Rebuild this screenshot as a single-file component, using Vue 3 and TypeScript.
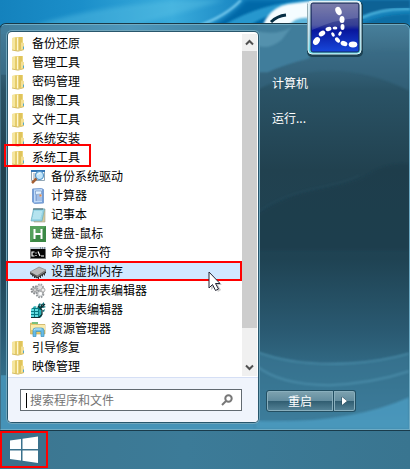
<script setup lang="ts">
import { ref } from 'vue'

type IconName =
  | 'folder' | 'backup' | 'calc' | 'note' | 'keys' | 'cmd'
  | 'chip' | 'gears' | 'registry' | 'explorer'

interface Entry {
  label: string
  icon: IconName
  child?: boolean
  active?: boolean
  mark?: 'label' | 'row'
}

const entries: Entry[] = [
  { label: '备份还原', icon: 'folder' },
  { label: '管理工具', icon: 'folder' },
  { label: '密码管理', icon: 'folder' },
  { label: '图像工具', icon: 'folder' },
  { label: '文件工具', icon: 'folder' },
  { label: '系统安装', icon: 'folder' },
  { label: '系统工具', icon: 'folder', mark: 'label' },
  { label: '备份系统驱动', icon: 'backup', child: true },
  { label: '计算器', icon: 'calc', child: true },
  { label: '记事本', icon: 'note', child: true },
  { label: '键盘-鼠标', icon: 'keys', child: true },
  { label: '命令提示符', icon: 'cmd', child: true },
  { label: '设置虚拟内存', icon: 'chip', child: true, active: true, mark: 'row' },
  { label: '远程注册表编辑器', icon: 'gears', child: true },
  { label: '注册表编辑器', icon: 'registry', child: true },
  { label: '资源管理器', icon: 'explorer', child: true },
  { label: '引导修复', icon: 'folder' },
  { label: '映像管理', icon: 'folder' },
]

const query = ref('')
</script>

<template>
  <div class="desktop">
    <svg class="art" viewBox="0 0 410 469" preserveAspectRatio="none" aria-hidden="true">
      <defs>
        <linearGradient id="sky" x1="0" x2="1" y1="0" y2="0">
          <stop offset="0" stop-color="#1482bd" />
          <stop offset=".2" stop-color="#1b8fca" />
          <stop offset=".42" stop-color="#3aacdc" />
          <stop offset=".6" stop-color="#1683c0" />
          <stop offset="1" stop-color="#1681b8" />
        </linearGradient>
        <filter id="soft"><feGaussianBlur stdDeviation="2" /></filter>
        <filter id="soft1"><feGaussianBlur stdDeviation="1" /></filter>
      </defs>
      <rect width="410" height="469" fill="url(#sky)" />
      <path d="M20 30Q80 8 180 0H225Q150 22 100 34Z" fill="#5fc4e6" opacity=".4" filter="url(#soft)" />
      <path d="M205 30C225 18 236 12 246 0H310V32Z" fill="#0568a7" filter="url(#soft)" />
      <path d="M198 26Q226 16 241 0" fill="none" stroke="#7fd0f2" stroke-width="2" filter="url(#soft1)" />
      <path d="M222 26Q262 2 312 0L300 9Q268 12 246 28Z" fill="#2697ce" filter="url(#soft1)" />
      <path d="M262 28Q268 8 288 4L312 1V26Z" fill="#f4fcff" filter="url(#soft1)" />
      <path d="M288 26Q296 16 310 18V28Z" fill="#5bb4da" filter="url(#soft1)" />
      <path d="M271 22Q277 16 286 15" fill="none" stroke="#042d43" stroke-width="3" />
      <path d="M360 0H410V8Q385 8 362 16Z" fill="#086295" filter="url(#soft1)" />
      <path d="M361 18Q382 8 410 9" fill="none" stroke="#59bde3" stroke-width="2" filter="url(#soft1)" />
      <path d="M362 24Q385 13 410 14V24Z" fill="#0b6ea5" filter="url(#soft1)" />
    </svg>

    <section class="menu" aria-label="开始菜单">
      <svg class="art" viewBox="0 24 410 406" preserveAspectRatio="none" aria-hidden="true">
        <defs>
          <linearGradient id="glass" x1="0" x2="0" y1="0" y2="1">
            <stop offset="0" stop-color="#477f9b" />
            <stop offset=".1" stop-color="#35637b" />
            <stop offset=".16" stop-color="#2a5366" />
            <stop offset=".36" stop-color="#21414f" />
            <stop offset=".58" stop-color="#1f4353" />
            <stop offset=".76" stop-color="#2a5a72" />
            <stop offset=".88" stop-color="#34708c" />
            <stop offset="1" stop-color="#4389ab" />
          </linearGradient>
          <linearGradient id="rim" x1="0" x2="1" y1="0" y2="0">
            <stop offset="0" stop-color="#437f9c" />
            <stop offset=".5" stop-color="#4e97bb" />
            <stop offset="1" stop-color="#3c7b99" />
          </linearGradient>
          <filter id="haze"><feGaussianBlur stdDeviation="1.2" /></filter>
        </defs>
        <rect y="24" width="410" height="406" fill="url(#glass)" />
        <rect y="24" width="258" height="9" fill="url(#rim)" />
        <rect y="24" width="8" height="50" fill="#417c99" opacity=".5" />
        <rect y="376" width="8" height="54" fill="#4590b3" />
        <rect y="421" width="410" height="9" fill="#4693b8" />
        <path d="M256 24H310V58Q285 64 268 72H256Z" fill="#417d9b" filter="url(#haze)" />
        <path d="M256 30Q278 35 292 26L282 39Q268 50 256 44Z" fill="#69a6bf" opacity=".5" filter="url(#haze)" />
        <path d="M256 72H270Q320 48 410 50V90Q330 50 256 90Z" fill="#376b85" opacity=".5" filter="url(#haze)" />
        <path d="M256 216C300 184 345 192 370 174Q390 161 410 164V250H256Z" fill="#1b3a49" opacity=".5" filter="url(#haze)" />
        <path d="M258 212C296 185 330 190 360 175" fill="none" stroke="#2f5a6d" stroke-width="1" opacity=".4" filter="url(#haze)" />
        <path d="M256 352Q295 367 350 364Q382 362 410 354V430H256Z" fill="#3a7995" opacity=".65" filter="url(#haze)" />
        <path d="M256 352Q295 367 350 364Q382 362 410 354" fill="none" stroke="#5aa0be" stroke-width="2" opacity=".5" filter="url(#haze)" />
        <path d="M256 366Q280 386 330 386Q374 384 410 372" fill="none" stroke="#5aa0bd" stroke-width="2" opacity=".5" filter="url(#haze)" />
        <path d="M256 422Q350 425 410 398V430H256Z" fill="#4d9dc2" opacity=".8" filter="url(#haze)" />
      </svg>

      <div class="panel">
        <div class="programs">
          <ul class="list">
            <li v-for="e in entries" :key="e.label">
              <button type="button" class="entry" :class="{ child: e.child, active: e.active }">
                <svg v-if="e.icon === 'folder'" class="icon" viewBox="0 0 16 16" aria-hidden="true">
                  <path d="M2 2l5-1h6v12l-5 2-6-1z" fill="#ecd67c" />
                  <path d="M2 2l3-.6V14.600L2 14z" fill="#f5e6a0" />
                  <path d="M5 1.400L8 2v13l-3-.5z" fill="#e6cd6b" />
                  <path d="M7 2l1.500-1v13L7 15z" fill="#fff8d0" />
                  <path d="M8.500 1H12v12l-3.500 1.500z" fill="#e0c45c" />
                  <path d="M11 6.500l3 .500v6.500L11 15z" fill="#f3e097" />
                  <path d="M2 14l6 1.200L14 13.500" fill="none" stroke="#cdb255" stroke-width=".8" />
                  <path d="M13.500 10.500V13" stroke="#54a8c9" />
                </svg>
                <svg v-else-if="e.icon === 'backup'" class="icon" viewBox="0 0 16 16" aria-hidden="true">
                  <path d="M1.500 1.500h13v10h-13z" fill="#fff" stroke="#91a6b5" />
                  <path d="M1 1h14v2H1z" fill="#3879b8" />
                  <path d="M3 5h3M3 7h2M3 9h2" stroke="#8f9ca8" />
                  <circle cx="9.500" cy="6.500" r="4" fill="#c2e5fa" stroke="#5397cc" stroke-width="1.200" />
                  <path d="M7.500 6q1-2 3-2" fill="none" stroke="#fff" />
                  <path d="M6.500 9.500L2 14" stroke="#a35f35" stroke-width="2.500" />
                </svg>
                <svg v-else-if="e.icon === 'calc'" class="icon" viewBox="0 0 16 16" aria-hidden="true">
                  <path d="M2.500 1l9-.5 2 1V15l-9 .5-2-1.500z" fill="#739fdb" stroke="#7c9fd0" />
                  <path d="M4 1.500l8-.5v13l-8 .500z" fill="#c0daf7" />
                  <path d="M5.500 3h6v3l-6 .500z" fill="#e3f2ff" stroke="#6386bc" stroke-width=".6" />
                  <path d="M5.500 8h2m1 0h1M5.500 10h2m1 0h1m1 0h1M5.500 12h2m1 0h1m1 0h1" stroke="#4b70b5" stroke-width="1.200" />
                  <path d="M9.500 6.500h2v2h-2z" fill="#ec8a3f" />
                </svg>
                <svg v-else-if="e.icon === 'note'" class="icon" viewBox="0 0 16 16" aria-hidden="true">
                  <path d="M4 2h11v13H4z" fill="#d5ca9d" stroke="#a2a28f" stroke-width=".6" />
                  <path d="M3.500 2h11L12 14H1z" fill="#98d5e6" stroke="#5da4b7" stroke-width=".6" />
                  <path d="M4 5h8M3.500 7h8M3 9h8M2.500 11h8" stroke="#d1f2f8" />
                  <path d="M4 1v2M6 1v2M8 1v2M10 1v2M12 1v2" stroke="#46646d" stroke-width="1" />
                </svg>
                <svg v-else-if="e.icon === 'keys'" class="icon" viewBox="0 0 16 16" aria-hidden="true">
                  <rect width="16" height="16" fill="#3b8945" />
                  <path d="M0 0h16L0 16z" fill="#55a15c" />
                  <path d="M4.500 3v10M11.500 3v10M4.500 8h7" stroke="#fff" stroke-width="2" />
                </svg>
                <svg v-else-if="e.icon === 'cmd'" class="icon" viewBox="0 0 16 16" aria-hidden="true">
                  <path d="M.5 2.500h15v11H.5z" fill="#050505" stroke="#777" />
                  <path d="M0 2h16v2H0z" fill="#c6d0da" />
                  <path d="M10 3h1M12 3h1M14 3h1" stroke="#456" />
                  <path d="M4.500 7H2v4h2.500M6 7.500v1M6 10v1M8 6.500l2 4.500M11 11h3" fill="none" stroke="#fff" stroke-width="1.200" />
                </svg>
                <svg v-else-if="e.icon === 'chip'" class="icon" viewBox="0 0 16 16" aria-hidden="true">
                  <path d="M0 9v1l7 4.500L16 9V7z" fill="#292929" />
                  <path d="M0 8l9-5 7 3-9 6z" fill="#b9b9b9" stroke="#777" stroke-width=".6" />
                  <path d="M0 8l7 4v1.500L0 9.500z" fill="#555" />
                  <path d="M7 12l9-6v1.500L7 13.500z" fill="#808080" />
                  <path d="M2.500 10.500v2M4.500 12v2M8.500 13v2M10.500 12v2M12.500 10.500v2M14.500 9.500v2" stroke="#333" />
                </svg>
                <svg v-else-if="e.icon === 'gears'" class="icon" viewBox="0 0 16 16" aria-hidden="true">
                  <circle cx="5" cy="7" r="3.500" fill="#c6c8ca" stroke="#85888b" stroke-width="2" stroke-dasharray="1.600 1.100" />
                  <circle cx="5" cy="7" r="1.400" fill="#fff" stroke="#999" />
                  <circle cx="10" cy="4.500" r="3" fill="#dedfe0" stroke="#a0a3a6" stroke-width="2" stroke-dasharray="1.400 1" />
                  <circle cx="10" cy="11" r="3.300" fill="#d7d9db" stroke="#93979a" stroke-width="2" stroke-dasharray="1.500 1.100" />
                  <circle cx="10.500" cy="10.500" r="1.500" fill="#fff" />
                  <circle cx="13" cy="7" r="2" fill="#eee" stroke="#aaa" />
                </svg>
                <svg v-else-if="e.icon === 'registry'" class="icon" viewBox="0 0 16 16" aria-hidden="true">
                  <path d="M1 7l3-2 3 1 2-3 2 1 1 10-2 2H1z" fill="#087c83" />
                  <path d="M1 7h3v2H1zm4 0h3v2H5zM1 10h3v2H1zm4 0h3v2H5zM1 13h3v2H1zm4 0h3v2H5z" fill="#61dce0" />
                  <path d="M9 8h2v5l-2 2zM3 5l2-1 2 1-2 1z" fill="#27b3b9" />
                  <path d="M8 3l2-2 1 2-2 1zm4-1l2-2v3h-2zm-1 3l3-1 2 1-3 1zm1 4l3-2-1 3z" fill="#087179" />
                  <path d="M8 4l4 4m0-6l-1 4m4-4l-4 4M1 15.500h8l3-3V8" fill="none" stroke="#112f32" stroke-width="1.200" />
                </svg>
                <svg v-else class="icon" viewBox="0 0 16 16" aria-hidden="true">
                  <path d="M.5 2h5l1 1.500h8.500V13H.5z" fill="#e6ca69" stroke="#bfa34b" stroke-width=".6" />
                  <path d="M2 1h6v2H2z" fill="#79c17e" />
                  <path d="M1 4h14v5H1z" fill="#faeba9" />
                  <path d="M3 15.500V9.500Q3 7 5.500 7h6Q14 7 14 9.500v6h-3v-5H6v5z" fill="#68bce6" stroke="#3c8fbd" stroke-width=".7" />
                  <path d="M4 9.500Q4 8 5.500 8h6" fill="none" stroke="#c6edff" />
                </svg>
                <span class="label">{{ e.label }}</span>
              </button>
              <span v-if="e.mark" class="mark" :class="e.mark"></span>
              <svg v-if="e.active" class="pointer" viewBox="0 0 14 22" aria-hidden="true">
                <path d="M3 4v15l4-3 3 5 3-2-3-5h4z" fill="#555" opacity=".3" />
                <path d="M1 1v16l3.500-3.500 3 6 3-1.500-3-5.500H12z" fill="#fff" stroke="#252535" />
              </svg>
            </li>
          </ul>
          <div class="scroll">
            <button type="button" aria-label="向上滚动">
              <svg viewBox="0 0 9 7" aria-hidden="true"><path d="M1 5.500l3.500-3.500L8 5.500" /></svg>
            </button>
            <div class="track"><div class="thumb"></div></div>
            <button type="button" aria-label="向下滚动">
              <svg viewBox="0 0 9 7" aria-hidden="true"><path d="M1 1.500L4.500 5 8 1.500" /></svg>
            </button>
          </div>
        </div>
        <div class="searchbar">
          <label class="search">
            <span class="caret"></span>
            <input v-model="query" type="text" placeholder="搜索程序和文件" aria-label="搜索程序和文件" />
            <svg viewBox="0 0 12 12" aria-hidden="true">
              <circle cx="7.500" cy="4.500" r="3.200" />
              <path d="M5 7L1 11" />
            </svg>
          </label>
        </div>
      </div>

      <div class="side">
        <nav class="links">
          <a href="#computer">计算机</a>
          <a href="#run">运行...</a>
        </nav>
        <div class="power">
          <button type="button" class="restart"><span class="label">重启</span></button>
          <button type="button" class="more" aria-label="更多选项">
            <svg viewBox="0 0 7 10" aria-hidden="true"><path d="M1 1v8l5-4z" /></svg>
          </button>
        </div>
      </div>

      <svg class="avatar" viewBox="0 0 58 58" aria-hidden="true">
        <defs>
          <linearGradient id="blue" x1="0" x2="0" y1="0" y2="1">
            <stop offset="0" stop-color="#65679b" />
            <stop offset=".45" stop-color="#343e94" />
            <stop offset=".55" stop-color="#08169c" />
            <stop offset="1" stop-color="#1748dc" />
          </linearGradient>
          <linearGradient id="frame" x1="0" x2="0" y1="0" y2="1">
            <stop offset="0" stop-color="#e4f0f5" />
            <stop offset=".6" stop-color="#a7cfdf" />
            <stop offset="1" stop-color="#5ed6e5" />
          </linearGradient>
        </defs>
        <rect x="1" y="1" width="56" height="56" rx="5" fill="#163846" opacity=".8" />
        <rect x="2" y="1" width="53" height="53" rx="4" fill="url(#frame)" stroke="#e5f8fc" />
        <rect x="5" y="3" width="48" height="49" rx="2" fill="url(#blue)" stroke="#172c53" />
        <path d="M6 4h46v14Q30 19 6 30z" fill="#fff" opacity=".15" />
        <g fill="#fff">
          <ellipse cx="32.500" cy="11" rx="3" ry="4.200" transform="rotate(-22 32.500 11)" />
          <ellipse cx="36" cy="19.500" rx="2.500" ry="3.500" />
          <ellipse cx="36.500" cy="27" rx="2" ry="3" />
          <ellipse cx="34" cy="33.500" rx="1.400" ry="2.400" transform="rotate(30 34 33.500)" />
          <ellipse cx="10.500" cy="41" rx="3" ry="4.200" transform="rotate(35 10.500 41)" />
          <ellipse cx="16" cy="33.500" rx="3.500" ry="2.500" transform="rotate(-35 16 33.500)" />
          <ellipse cx="22.500" cy="29" rx="3" ry="2" transform="rotate(-15 22.500 29)" />
          <ellipse cx="29" cy="28" rx="2.400" ry="1.500" />
          <ellipse cx="27" cy="34.500" rx="1.500" ry="2.400" transform="rotate(-30 27 34.500)" />
          <ellipse cx="31.500" cy="40" rx="3" ry="2" transform="rotate(48 31.500 40)" />
          <ellipse cx="38" cy="43.500" rx="3.500" ry="2.500" transform="rotate(20 38 43.500)" />
          <ellipse cx="47" cy="44.500" rx="4.300" ry="3" />
        </g>
      </svg>
    </section>

    <footer class="taskbar">
      <button type="button" class="start" aria-label="开始">
        <svg viewBox="0 0 28 28" aria-hidden="true">
          <path d="M0 4.500L11 3v10H0zM12.500 2.800L28 .5V13H12.500zM0 14.500h11v10L0 23zM12.500 14.500H28V27l-15.500-2.300z" fill="#fff" />
        </svg>
      </button>
    </footer>
  </div>
</template>

<style>
body {
  margin: 0;
}
</style>

<style scoped>
.desktop {
  position: relative;
  display: flex;
  flex-direction: column;
  box-sizing: border-box;
  min-height: 100vh;
  padding-top: 24px;
  font: 12px/17px "Noto Sans CJK SC", sans-serif;
  color: #000;
}
button,
input {
  font: inherit;
  color: inherit;
  border: 0;
  padding: 0;
  margin: 0;
}
svg {
  display: block;
  flex: none;
}
.art {
  position: absolute;
  inset: 0;
  width: 100%;
  height: 100%;
}
.menu {
  position: relative;
  display: flex;
  flex: 1;
  box-sizing: border-box;
  padding: 7px 0 7px 7px;
  border: 1px solid #6eabc4;
  border-left-color: #427086;
  border-radius: 6px 6px 0 0;
  box-shadow: 0 0 0 1px #193947;
}
.menu > .art {
  border-radius: 5px 5px 0 0;
}
.panel {
  position: relative;
  display: flex;
  flex-direction: column;
  flex: 0 0 250px;
  border-radius: 4px;
  background: #fff;
  box-shadow: 0 0 0 1px #28566c, 0 0 0 2px #71a6bc;
}
.programs {
  display: flex;
  flex: 1;
  padding: 2px 1px 1px 0;
}
.list {
  flex: 1;
  margin: 0;
  padding: 0;
  list-style: none;
}
.list li {
  position: relative;
}
.entry {
  display: flex;
  align-items: center;
  gap: 6px;
  width: 100%;
  height: 19px;
  padding-left: 2px;
  background: transparent;
  text-align: left;
  white-space: nowrap;
}
.entry.child {
  gap: 5px;
  padding-left: 22px;
}
.entry.active {
  background: #d1e8ff;
}
.label {
  padding-bottom: 2px;
}
.icon {
  width: 16px;
  height: 16px;
}
.mark {
  position: absolute;
  border: 2px solid #f00;
  pointer-events: none;
  z-index: 1;
}
.mark.label {
  left: -4px;
  top: -4px;
  width: 83px;
  height: 19px;
  padding: 0;
}
.mark.row {
  inset: -1px 0 0 -2px;
}
.pointer {
  position: absolute;
  left: 200px;
  top: 9px;
  width: 14px;
  height: 22px;
  z-index: 1;
}
.scroll {
  display: flex;
  flex-direction: column;
  width: 15px;
  background: #f0f0f0;
}
.scroll button {
  display: grid;
  place-items: center;
  height: 17px;
  background: #f0f0f0;
}
.scroll svg {
  width: 9px;
  height: 7px;
  fill: none;
  stroke: #505050;
  stroke-width: 2;
}
.track {
  flex: 1;
}
.thumb {
  height: 90%;
  background: #cdcdcd;
}
.searchbar {
  padding: 11px 16px 11px 12px;
  border-top: 1px solid #d5dff5;
  border-radius: 0 0 4px 4px;
  background: #f0f4fc;
}
.search {
  display: flex;
  align-items: center;
  height: 20px;
  padding: 0 8px 0 5px;
  border: 1px solid #626a71;
  background: #fff;
}
.caret {
  width: 1px;
  height: 15px;
  margin-right: 3px;
  background: #000;
}
.search input {
  flex: 1;
  min-width: 0;
  height: 17px;
  padding-bottom: 2px;
  background: transparent;
  outline: 0;
}
.search input::placeholder {
  color: #747474;
  opacity: 1;
}
.search svg {
  width: 12px;
  height: 12px;
  fill: none;
  stroke: #777;
  stroke-width: 2;
}
.side {
  position: relative;
  display: flex;
  flex: 1;
  flex-direction: column;
  justify-content: space-between;
  padding: 42px 8px 10px;
}
.links {
  display: flex;
  flex-direction: column;
  gap: 18px;
  padding-left: 6px;
}
.links a {
  color: #fff;
  text-decoration: none;
}
.power {
  display: flex;
}
.power button {
  display: grid;
  place-items: center;
  box-sizing: border-box;
  height: 22px;
  border: 1px solid #234f62;
  box-shadow: inset 0 0 0 1px #89afbd;
  background: linear-gradient(#7fa3b0, #638d9f 48%, #315e72 52%, #568498);
  color: #fff;
}
.power .restart {
  width: 68px;
  border-radius: 3px 0 0 3px;
}
.power .more {
  width: 22px;
  border-left: 0;
  border-radius: 0 3px 3px 0;
}
.more svg {
  width: 7px;
  height: 10px;
  fill: #fff;
  stroke: #244657;
  stroke-width: 1;
  paint-order: stroke;
}
.avatar {
  position: absolute;
  right: 45px;
  top: -25px;
  width: 58px;
  height: 58px;
}
.taskbar {
  position: relative;
  display: flex;
  height: 38px;
  border-top: 1px solid #193b4b;
  background: linear-gradient(90deg, #3c7690, #3c7b98 45%, #397590);
}
.start {
  display: grid;
  place-items: center;
  box-sizing: border-box;
  width: 48px;
  height: 37px;
  border: 2px solid #f00;
  background: #3a718c;
}
.start svg {
  width: 28px;
  height: 28px;
}
</style>
